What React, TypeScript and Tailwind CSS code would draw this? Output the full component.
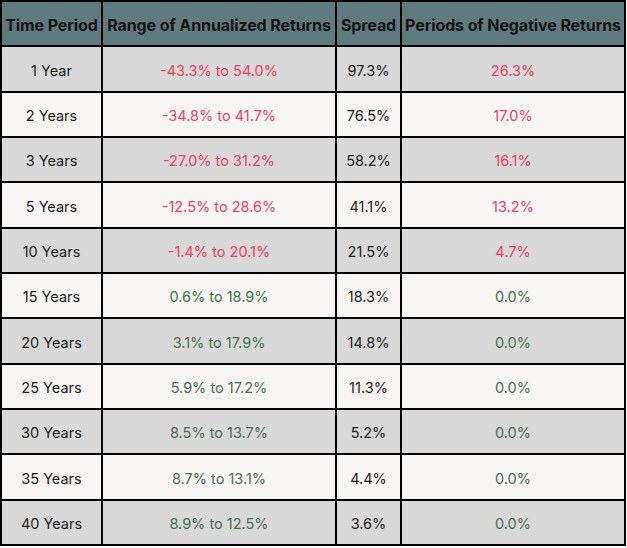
const rows = [
  { period: "1 Year", range: "-43.3% to 54.0%", spread: "97.3%", neg: "26.3%", bad: true },
  { period: "2 Years", range: "-34.8% to 41.7%", spread: "76.5%", neg: "17.0%", bad: true },
  { period: "3 Years", range: "-27.0% to 31.2%", spread: "58.2%", neg: "16.1%", bad: true },
  { period: "5 Years", range: "-12.5% to 28.6%", spread: "41.1%", neg: "13.2%", bad: true },
  { period: "10 Years", range: "-1.4% to 20.1%", spread: "21.5%", neg: "4.7%", bad: true },
  { period: "15 Years", range: "0.6% to 18.9%", spread: "18.3%", neg: "0.0%", bad: false },
  { period: "20 Years", range: "3.1% to 17.9%", spread: "14.8%", neg: "0.0%", bad: false },
  { period: "25 Years", range: "5.9% to 17.2%", spread: "11.3%", neg: "0.0%", bad: false },
  { period: "30 Years", range: "8.5% to 13.7%", spread: "5.2%", neg: "0.0%", bad: false },
  { period: "35 Years", range: "8.7% to 13.1%", spread: "4.4%", neg: "0.0%", bad: false },
  { period: "40 Years", range: "8.9% to 12.5%", spread: "3.6%", neg: "0.0%", bad: false },
];

const headers = ["Time Period", "Range of Annualized Returns", "Spread", "Periods of Negative Returns"];

export default function App() {
  return (
    <div className="w-[627px] h-[548px] bg-white font-['Inter',sans-serif]">
      <div className="grid h-[546px] w-[626px] grid-cols-[99px_232px_63px_222px] grid-rows-[repeat(12,1fr)] gap-[2px] bg-black p-[2px]">
        {headers.map((h) => (
          <div
            key={h}
            className="flex items-center justify-center whitespace-nowrap bg-[#607b7d] pt-[3px] text-[16px] font-bold tracking-[-0.1px] text-[#111]"
          >
            {h}
          </div>
        ))}
        {rows.map((r, i) => {
          const bg = i % 2 === 0 ? "bg-[#d9d9d9]" : "bg-[#f7f6f4]";
          const tone = r.bad ? "text-[#f23d5c]" : "text-[#44704f]";
          return [
            <div key={r.period + "a"} className={`flex items-center justify-center pt-[3px] text-[14.5px] text-[#1c1c1c] ${bg}`}>
              {r.period}
            </div>,
            <div key={r.period + "b"} className={`flex items-center justify-center pt-[3px] text-[14.5px] ${tone} ${bg}`}>
              {r.range}
            </div>,
            <div key={r.period + "c"} className={`flex items-center justify-center pt-[3px] text-[14.5px] text-[#1c1c1c] ${bg}`}>
              {r.spread}
            </div>,
            <div key={r.period + "d"} className={`flex items-center justify-center pt-[3px] text-[14.5px] ${tone} ${bg}`}>
              {r.neg}
            </div>,
          ];
        })}
      </div>
    </div>
  );
}
